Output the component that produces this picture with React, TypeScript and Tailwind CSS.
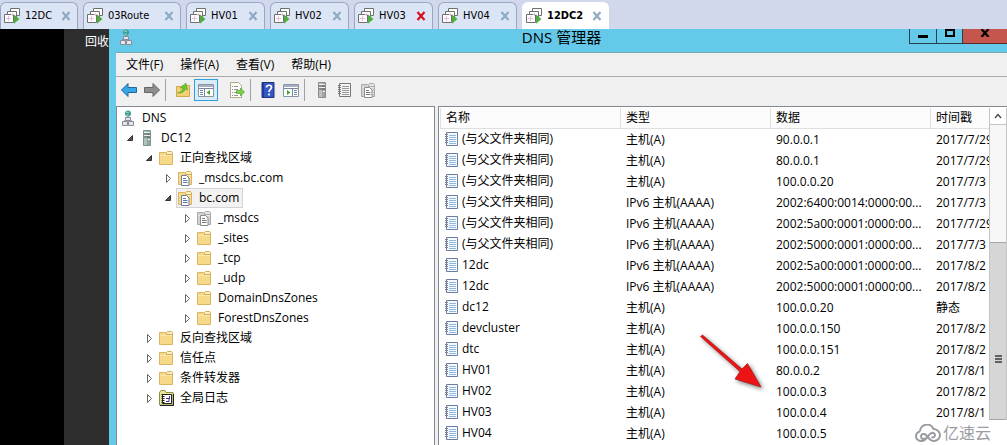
import React from "react";

type Tab = { name: string; width: string; active?: boolean; alert?: boolean };

const TABS: Tab[] = [
  { name: "12DC", width: "w-[78px]" },
  { name: "03Route", width: "w-[98px]" },
  { name: "HV01", width: "w-[79px]" },
  { name: "HV02", width: "w-[79px]" },
  { name: "HV03", width: "w-[79px]", alert: true },
  { name: "HV04", width: "w-[79px]" },
  { name: "12DC2", width: "w-[87px]", active: true },
];

type IconKind = "dns" | "server" | "folder" | "zone" | "grayzone" | "log";
type Node = { label: string; level: number; icon: IconKind; open?: boolean; selected?: boolean };

const TREE: Node[] = [
  { label: "DNS", level: 0, icon: "dns" },
  { label: "DC12", level: 1, icon: "server", open: true },
  { label: "正向查找区域", level: 2, icon: "folder", open: true },
  { label: "_msdcs.bc.com", level: 3, icon: "zone" },
  { label: "bc.com", level: 3, icon: "zone", open: true, selected: true },
  { label: "_msdcs", level: 4, icon: "grayzone" },
  { label: "_sites", level: 4, icon: "folder" },
  { label: "_tcp", level: 4, icon: "folder" },
  { label: "_udp", level: 4, icon: "folder" },
  { label: "DomainDnsZones", level: 4, icon: "folder" },
  { label: "ForestDnsZones", level: 4, icon: "folder" },
  { label: "反向查找区域", level: 2, icon: "folder" },
  { label: "信任点", level: 2, icon: "folder" },
  { label: "条件转发器", level: 2, icon: "folder" },
  { label: "全局日志", level: 2, icon: "log" },
];

const INDENT = ["pl-0.5", "pl-[5px]", "pl-[24px]", "pl-[43px]", "pl-[62px]"];

const SAME = "(与父文件夹相同)";
const A = "主机(A)";
const AAAA = "IPv6 主机(AAAA)";
const RECORDS: [string, string, string, string][] = [
  [SAME, A, "90.0.0.1", "2017/7/29"],
  [SAME, A, "80.0.0.1", "2017/7/29"],
  [SAME, A, "100.0.0.20", "2017/7/3"],
  [SAME, AAAA, "2002:6400:0014:0000:00...", "2017/7/3"],
  [SAME, AAAA, "2002:5a00:0001:0000:00...", "2017/7/29"],
  [SAME, AAAA, "2002:5000:0001:0000:00...", "2017/7/3"],
  ["12dc", AAAA, "2002:5a00:0001:0000:00...", "2017/8/2"],
  ["12dc", AAAA, "2002:5000:0001:0000:00...", "2017/8/2"],
  ["dc12", A, "100.0.0.20", "静态"],
  ["devcluster", A, "100.0.0.150", "2017/8/2"],
  ["dtc", A, "100.0.0.151", "2017/8/2"],
  ["HV01", A, "80.0.0.2", "2017/8/1"],
  ["HV02", A, "100.0.0.3", "2017/8/2"],
  ["HV03", A, "100.0.0.4", "2017/8/1"],
  ["HV04", A, "100.0.0.5", ""],
];

const Svg = ({ children }: { children: React.ReactNode }) => (
  <svg viewBox="0 0 16 16" className="size-4 shrink-0" aria-hidden="true">
    {children}
  </svg>
);

const VmIcon = () => (
  <Svg>
    <g fill="#fff" stroke="#6d706d">
      <path d="M6.500 .5h9v7h-9z" />
      <path d="M3.500 3.500h9v7h-9z" />
      <path d="M.5 6.500h9v8h-9z" />
    </g>
    <path d="M4.500 8v5M2 10.500h5M8.500 5v3M7 6.500h3" stroke="#e3bfdd" />
    <path d="M10 6.500l5.500 4.500-5.500 4.800z" fill="#4fae3d" />
  </Svg>
);

const CloseGlyph = ({ className }: { className: string }) => (
  <svg viewBox="0 0 10 10" className={"size-[10px] " + className} aria-hidden="true">
    <path d="M1.500 1l7 8M8.500 1l-7 8" stroke="currentColor" strokeWidth="2.200" />
  </svg>
);

const DnsIcon = () => (
  <Svg>
    <circle cx="8" cy="3.500" r="3" fill="#3d9c95" />
    <path d="M6 2.500c1-1 2 .5 3-.5M6.500 5h2" stroke="#b7e6da" fill="none" />
    <path d="M8 6v2M4.500 12v-1.500h7V12" stroke="#8a8d98" fill="none" />
    <path d="M5.500 7.500h5v3h-5zM2.500 11.500h5v4h-5zM8.500 11.500h5v4h-5z" fill="#e3e7ec" stroke="#8a8d98" />
  </Svg>
);

const ServerIcon = ({ gray = false }: { gray?: boolean }) => (
  <Svg>
    <path d="M4.500 .5h7v15h-7z" fill={gray ? "#a4a4a4" : "#8fa8a3"} stroke={gray ? "#8c8c8c" : "#80948e"} />
    <path d="M5 1h3v14H5z" fill="#fff" opacity=".3" />
    <path d="M5 2.500h6M5 5.500h6" stroke="#eef3f1" />
    <path d="M5 4h6M5 7h6" stroke="#4d5956" />
    <path d="M9 9h2v1H9z" fill="#dff" />
  </Svg>
);

const FolderShape = ({ gray = false }: { gray?: boolean }) => (
  <>
    <path d="M1.500 2.500h6l1 1h6v11h-13z" fill={gray ? "#d3d3d3" : "#f7d98a"} stroke={gray ? "#a8a8a8" : "#dcb562"} />
    <path d="M8.500 4.500v-2l1-1h4l1 1v2z" fill={gray ? "#e6e6e6" : "#fdf0c4"} stroke={gray ? "#a8a8a8" : "#d3aa55"} />
    <path d="M2 5.500h12" stroke={gray ? "#e9e9e9" : "#fbe5a9"} />
  </>
);

const PageShape = ({ gray = false }: { gray?: boolean }) => (
  <>
    <path d="M4.500 5.500h5l2.500 2.500v7.500H4.500z" fill="#fff" stroke={gray ? "#8b8b8b" : "#6c7c9e"} />
    <path d="M6 8.500h3M6 10.500h4.500M6 12.500h4.500" stroke={gray ? "#777" : "#5b7ab5"} />
  </>
);

const NodeIcon = ({ kind }: { kind: IconKind }) => {
  if (kind === "dns") return <DnsIcon />;
  if (kind === "server") return <ServerIcon />;
  if (kind === "folder") return <Svg><FolderShape /></Svg>;
  if (kind === "zone") return <Svg><FolderShape /><PageShape /></Svg>;
  if (kind === "grayzone") return <Svg><FolderShape gray /><PageShape gray /></Svg>;
  return (
    <Svg>
      <path d="M1.500 2.500L3 .5h4l1 2h7v12.500H1.500z" fill="#e9e79a" stroke="#8f8c46" />
      <path d="M4.500 4.500h9v9h-9z" fill="#fff" stroke="#222" />
      <path d="M5 4v10" stroke="#222" strokeWidth="3" strokeDasharray="1 1" />
      <path d="M8 8.500h3v3H8M11.500 6v3" stroke="#4a2f94" fill="none" />
      <path d="M15.500 4v11.500H2" stroke="#222" fill="none" />
    </Svg>
  );
};

const NotebookIcon = ({ gray = false }: { gray?: boolean }) => (
  <Svg>
    <path d="M2.500 1.500h11v13h-11z" fill={gray ? "#f4f4f4" : "#f4faff"} stroke={gray ? "#777" : "#6b7ca0"} />
    <path d="M5 4.500h7M5 6.500h7M5 8.500h7M5 10.500h7M5 12.500h7" stroke={gray ? "#999" : "#8fb9dc"} />
    <path d="M1 3.500h3M1 5.500h3M1 7.500h3M1 9.500h3M1 11.500h3" stroke={gray ? "#777" : "#7d828e"} />
  </Svg>
);

const Arrow = ({ left = false }: { left?: boolean }) => (
  <Svg>
    {left ? (
      <path d="M.5 8L7 1.500v4h8.500v5H7v4z" fill="#37a6e6" stroke="#24679b" />
    ) : (
      <path d="M15.500 8L9 1.500v4H.5v5H9v4z" fill="#8e8e8e" stroke="#666" />
    )}
  </Svg>
);

const WindowIcon = ({ left = false }: { left?: boolean }) => (
  <Svg>
    <path d="M.5 2.500h15v12H.5z" fill="#fff" stroke="#8a94a5" />
    <path d="M1 3h14v2H1z" fill="#a5b2c6" />
    <path d="M1 6.500h14" stroke="#7a879b" />
    {left ? (
      <>
        <path d="M6.500 7v7" stroke="#7a879b" />
        <path d="M2 8.500h3M2 10.500h3M2 12.500h3" stroke="#6f86ab" />
        <path d="M12 8v5l-3.500-2.500z" fill="#46a33a" />
      </>
    ) : (
      <>
        <path d="M9.500 7v7" stroke="#7a879b" />
        <path d="M11 8.500h3M11 10.500h3M11 12.500h3" stroke="#6f86ab" />
        <path d="M4 8v5l3.500-2.500z" fill="#46a33a" />
      </>
    )}
  </Svg>
);

const UpFolder = () => (
  <Svg>
    <path d="M1.500 4.500h5l1-1h7v11h-13z" fill="#f3d175" stroke="#cfa84f" />
    <path d="M2.500 11c3-.5 5-2.500 5.500-5H5l6-5 1.500 7-2-1c-1 3-4 4.500-8 4z" fill="#6cc531" stroke="#459a23" strokeWidth=".5" />
  </Svg>
);

const ExportIcon = () => (
  <Svg>
    <path d="M1.500 .5h8l3 3v12h-11z" fill="#fffef2" stroke="#b0a98a" />
    <path d="M3 4.500h1M5 4.500h4M3 7.500h1M5 7.500h4M3 10.500h1M5 10.500h3M3 13.500h1M5 13.500h4" stroke="#8f93a5" />
    <path d="M7.500 8.500h4V6l4 4-4 4v-2.500h-4z" fill="#7bce45" stroke="#479b2a" strokeWidth=".6" />
  </Svg>
);

const HelpIcon = () => (
  <Svg>
    <path d="M2 .5h12v15H2z" fill="#3557c6" stroke="#22337c" />
    <path d="M2 .5h2v15H2z" fill="#213a93" />
    <path d="M6.500 5.500c0-3 5-3 5 0 0 2-2.500 2-2.500 4.500M9 11.500v2" stroke="#fff" strokeWidth="1.700" fill="none" />
  </Svg>
);

const ToolButton = ({ label, pressed = false, children }: { label: string; pressed?: boolean; children: React.ReactNode }) => (
  <button
    type="button"
    aria-label={label}
    className={
      "flex h-[22px] items-center justify-center border " +
      (pressed ? "w-6 border-[#2f9fd8] bg-[#d9ecf8]" : "w-[23px] border-transparent")
    }
  >
    {children}
  </button>
);

const Divider = () => <span className="mr-[5px] ml-0.5 h-[22px] w-px bg-[#a0a0a0]" />;

const Cell = ({ children }: { children: React.ReactNode }) => (
  <td className="overflow-hidden p-0 pl-1.5 whitespace-nowrap">{children}</td>
);

export default function App() {
  return (
    <div className="flex h-screen flex-col overflow-hidden bg-black font-['Open_Sans','Noto_Sans_CJK_SC',sans-serif] text-xs text-black">
      <nav className="flex h-[29px] shrink-0 items-end gap-[5px] bg-[#d2d8eb] font-['DejaVu_Sans_Condensed','DejaVu_Sans',sans-serif] text-[11px]">
        {TABS.map((t) => (
          <div
            key={t.name}
            className={
              "flex h-[27px] items-center rounded-t-md border border-b-0 pr-1.5 pl-[3px] " +
              t.width +
              (t.active ? " border-white bg-white font-bold" : " border-[#98a6c8] bg-[#dce5f5]")
            }
          >
            <button type="button" className="flex flex-1 items-center gap-[5px]">
              <VmIcon />
              {t.name}
            </button>
            <button type="button" aria-label={"Close " + t.name}>
              <CloseGlyph className={t.alert ? "text-[#d8101a]" : "text-[#8fabc4]"} />
            </button>
          </div>
        ))}
      </nav>

      <div className="flex min-h-0 flex-1">
        <div className="w-16 shrink-0 bg-black" />
        <div className="flex w-[45px] shrink-0 justify-end bg-[#2d2d2d] pt-[5px] text-white">回收</div>

        <section className="flex min-w-0 flex-1 flex-col bg-[#65c9ea] pl-[7px]">
          <header className="grid h-6 shrink-0 grid-cols-[1fr_auto_1fr] items-start border-b border-[#7aa9b8]">
            <div className="pl-0.5">
              <DnsIcon />
            </div>
            <h1 className="text-[15px] leading-4">DNS 管理器</h1>
            <div className="flex justify-end">
              <button type="button" aria-label="Minimize" className="flex h-[15px] w-7 items-center justify-center border border-t-0 border-[#24424e]">
                <span className="h-[3px] w-2.5 bg-black" />
              </button>
              <button type="button" aria-label="Maximize" className="flex h-[15px] w-[26px] items-start justify-center border-r border-b border-[#24424e]">
                <span className="h-2 w-2.5 border-2 border-black" />
              </button>
              <button type="button" aria-label="Close" className="flex h-[15px] w-11 items-start justify-center border-b border-[#5c2a26] bg-[#c4564e]">
                <svg viewBox="0 0 10 8" className="h-2 w-2.5" aria-hidden="true">
                  <path d="M1.500 0l7 8M8.500 0l-7 8" stroke="#000" strokeWidth="2.200" />
                </svg>
              </button>
            </div>
          </header>

          <div className="flex h-6 shrink-0 items-center gap-[17px] border-b border-[#a9a9a9] bg-[#f0f0f0] pl-2.5">
            {["文件(F)", "操作(A)", "查看(V)", "帮助(H)"].map((m) => (
              <button key={m} type="button">
                {m}
              </button>
            ))}
          </div>

          <div className="flex h-[29px] shrink-0 items-center bg-[#f0f0f0] pb-1 pl-px">
            <ToolButton label="Back"><Arrow left /></ToolButton>
            <ToolButton label="Forward"><Arrow /></ToolButton>
            <Divider />
            <ToolButton label="Up one level"><UpFolder /></ToolButton>
            <ToolButton label="Show console tree" pressed><WindowIcon left /></ToolButton>
            <span className="w-[7px]" />
            <ToolButton label="Export list"><ExportIcon /></ToolButton>
            <Divider />
            <ToolButton label="Help"><HelpIcon /></ToolButton>
            <ToolButton label="Show action pane"><WindowIcon /></ToolButton>
            <Divider />
            <ToolButton label="Server"><ServerIcon gray /></ToolButton>
            <ToolButton label="Records"><NotebookIcon gray /></ToolButton>
            <ToolButton label="New zone"><Svg><FolderShape gray /><PageShape gray /></Svg></ToolButton>
          </div>

          <div className="flex min-h-0 flex-1 gap-[3px] bg-[#f0f0f0]">
            <ul role="tree" className="w-[319px] shrink-0 overflow-hidden border border-b-0 border-[#828790] bg-white pt-px">
              {TREE.map((n, i) => (
                <li key={i} role="treeitem" aria-level={n.level + 1} aria-selected={!!n.selected} className={"flex h-5 items-center " + INDENT[n.level]}>
                  {n.level > 0 && (
                    <button type="button" aria-label={(n.open ? "Collapse " : "Expand ") + n.label} className="w-4">
                      <svg viewBox="0 0 16 16" className="size-4" aria-hidden="true">
                        {n.open ? (
                          <path d="M10.500 5.500v5H5.500z" fill="#555" stroke="#333" />
                        ) : (
                          <path d="M6.500 4.500v8l4-4z" fill="#fff" stroke="#666" />
                        )}
                      </svg>
                    </button>
                  )}
                  <span
                    className={
                      "flex h-5 items-center gap-1.5 border pr-[3px] whitespace-nowrap " +
                      (n.selected ? "border-[#d4d4d4] bg-[#f2f2f2]" : "border-transparent")
                    }
                  >
                    <NodeIcon kind={n.icon} />
                    {n.label}
                  </span>
                </li>
              ))}
            </ul>

            <div className="relative flex min-w-0 flex-1 border-t border-l border-[#828790] bg-white pt-px pl-px">
              <div className="min-w-0 flex-1 overflow-hidden">
                <table className="w-full table-fixed border-separate border-spacing-0 text-left">
                  <colgroup>
                    <col className="w-[180px]" />
                    <col className="w-[150px]" />
                    <col className="w-[160px]" />
                    <col />
                  </colgroup>
                  <thead>
                    <tr className="h-[21px] bg-[#fcfcfc]">
                      {["名称", "类型", "数据", "时间戳"].map((h) => (
                        <th key={h} className="border-b border-l border-[#dedfe1] p-0 pl-[5px] font-normal whitespace-nowrap">
                          {h}
                        </th>
                      ))}
                    </tr>
                  </thead>
                  <tbody>
                    {RECORDS.map((r, i) => (
                      <tr key={i} className="h-[21px]">
                        <td className="p-0 pl-1 align-top">
                          <span className="flex h-5 items-center gap-0.5 whitespace-nowrap">
                            <NotebookIcon />
                            {r[0]}
                          </span>
                        </td>
                        <Cell>{r[1]}</Cell>
                        <Cell>{r[2]}</Cell>
                        <Cell>{r[3]}</Cell>
                      </tr>
                    ))}
                  </tbody>
                </table>
              </div>

              <div className="flex w-[18px] shrink-0 flex-col border-x border-[#c4c4c4] bg-[#f7f7f7]">
                <button type="button" aria-label="Scroll up" className="flex h-[17px] shrink-0 items-center justify-center border-b border-[#c4c4c4] bg-white">
                  <svg viewBox="0 0 8 6" className="h-1.5 w-2" aria-hidden="true">
                    <path d="M1 5l3-3.500L7 5" fill="none" stroke="#444" strokeWidth="1.300" />
                  </svg>
                </button>
                <div className="flex-[118]" />
                <div className="flex flex-[177] flex-col items-center justify-center border-y border-[#a6a6a6] bg-[#d6d6d6]">
                  <span className="mt-14 flex flex-col gap-px">
                    <span className="h-0.5 w-[7px] bg-[#606060]" />
                    <span className="h-0.5 w-[7px] bg-[#606060]" />
                    <span className="h-0.5 w-[7px] bg-[#606060]" />
                  </span>
                </div>
                <div className="h-[25px] shrink-0" />
              </div>

              <svg viewBox="0 0 70 62" className="absolute top-[225px] left-[258px] h-[62px] w-[70px] drop-shadow-[2px_2px_2px_rgba(0,0,0,0.5)]" aria-hidden="true">
                <path d="M3.500 4.500L5.500 3 45 37l5.500-5.500L64 55l-26-8 5-7.500z" fill="#ee1416" stroke="#a01316" strokeWidth=".7" />
              </svg>

              <div className="absolute right-0 bottom-0 flex h-[25px] items-center gap-0.5 bg-white pr-4 pl-1 text-base text-[#9a9ca3]">
                <svg viewBox="0 0 26 18" className="h-[18px] w-[26px]" fill="none" stroke="currentColor" strokeWidth="2" aria-hidden="true">
                  <path d="M5 7.500a7 7 0 0 1 13.500-2.500c3 0 6.500 2.500 6.500 6s-3 6-6 6c-4 0-5.500-3.500-8-6-2-2-5-1-5 1.500s3 3.500 5 1.500" />
                  <path d="M5 7.500c-2.500 .5-4 2.500-4 5C1 15 3.500 17 6.500 17c4.500 0 6-5 9-7.500 2-1.500 4.500-.5 4.500 1.500s-2 3-3.500 2" />
                </svg>
                <span className="leading-6">亿速云</span>
              </div>
            </div>
          </div>
        </section>
      </div>
    </div>
  );
}
